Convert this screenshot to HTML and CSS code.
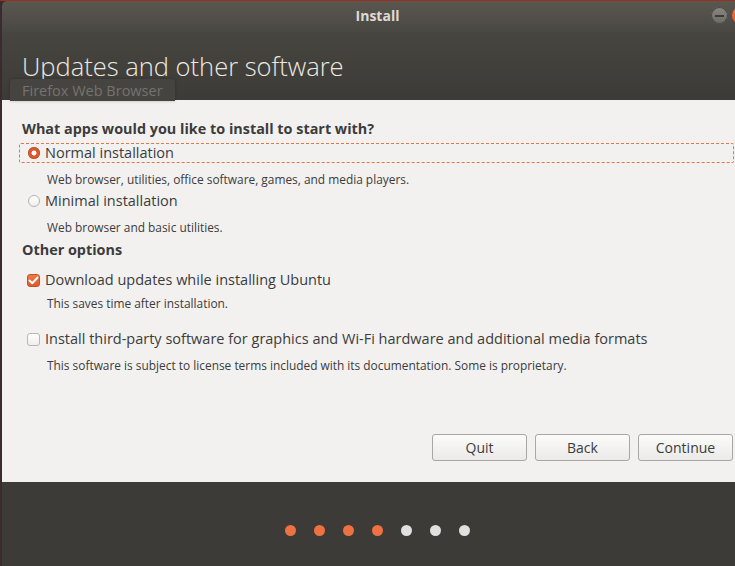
FILE: index.html
```html
<!DOCTYPE html>
<html>
<head>
<meta charset="utf-8">
<link rel="stylesheet" href="styles.css">
</head>
<body>
<div class="window">
  <div class="titlebar">
    <span class="title">Install</span>
    <span class="btn-min"></span>
    <span class="btn-close"></span>
  </div>
  <div class="header">
    <h1 class="heading">Updates and other software</h1>
    <div class="tooltip">Firefox Web Browser</div>
  </div>
  <div class="content">
    <div class="section-title q">What apps would you like to install to start with?</div>
    <div class="option focus">
      <span class="radio checked"></span>
      <span class="label">Normal installation</span>
    </div>
    <div class="desc d1">Web browser, utilities, office software, games, and media players.</div>
    <div class="option o2">
      <span class="radio"></span>
      <span class="label">Minimal installation</span>
    </div>
    <div class="desc d1">Web browser and basic utilities.</div>
    <div class="section-title other">Other options</div>
    <div class="option o3">
      <span class="check checked"><svg width="11" height="9" viewBox="0 0 11 9"><path d="M1.5 4.5 L4.2 7.2 L9.5 1.6" fill="none" stroke="#fff" stroke-width="2" stroke-linecap="round" stroke-linejoin="round"/></svg></span>
      <span class="label">Download updates while installing Ubuntu</span>
    </div>
    <div class="desc d3">This saves time after installation.</div>
    <div class="option o4">
      <span class="check"></span>
      <span class="label">Install third-party software for graphics and Wi-Fi hardware and additional media formats</span>
    </div>
    <div class="desc d1">This software is subject to license terms included with its documentation. Some is proprietary.</div>
    <div class="buttons">
      <button class="button">Quit</button>
      <button class="button">Back</button>
      <button class="button">Continue</button>
    </div>
  </div>
  <div class="footer">
    <span class="dot done"></span>
    <span class="dot done"></span>
    <span class="dot done"></span>
    <span class="dot done"></span>
    <span class="dot"></span>
    <span class="dot"></span>
    <span class="dot"></span>
  </div>
</div>
</body>
</html>
```
FILE: styles.css
```css
html, body {
  margin: 0;
  padding: 0;
}
body {
  width: 735px;
  height: 566px;
  overflow: hidden;
  background: linear-gradient(to bottom, #9a2f22 0, #9a2f22 1px, #3a2b2f 1px);
  font-family: "Open Sans", "Noto Sans", sans-serif;
  color: #3c3c3c;
}
.window {
  margin: 1px 0 0 2px;
  width: 733px;
  height: 565px;
  display: flex;
  flex-direction: column;
  border-radius: 5px 0 0 0;
  overflow: hidden;
  position: relative;
}
.titlebar {
  height: 31px;
  flex: none;
  background: linear-gradient(to bottom, #5a5751, #4a4843);
  display: flex;
  align-items: center;
  justify-content: center;
  padding-left: 18px;
  padding-bottom: 2px;
  box-sizing: border-box;
  position: relative;
}
.title {
  color: #dfdbd2;
  font-weight: 700;
  font-size: 14px;
}
.btn-min {
  position: absolute;
  left: 709px;
  top: 6px;
  width: 17px;
  height: 17px;
  border-radius: 50%;
  background: linear-gradient(to bottom, #8a8782, #6c6a65);
  box-shadow: inset 0 0 0 1px #4a4843;
}
.btn-min::after {
  content: "";
  position: absolute;
  left: 4px;
  top: 8px;
  width: 9px;
  height: 1.5px;
  background: #3c3b37;
}
.btn-close {
  position: absolute;
  left: 730px;
  top: 6px;
  width: 17px;
  height: 17px;
  border-radius: 50%;
  background: linear-gradient(to bottom, #f37c50, #e0541f);
}
.header {
  height: 68px;
  flex: none;
  background: linear-gradient(to bottom, #47453f, #3d3b37);
  position: relative;
}
.heading {
  margin: 0;
  padding: 21px 0 0 20px;
  font-weight: 300;
  font-size: 25.5px;
  line-height: 26px;
  color: #ebe9e4;
}
.tooltip {
  position: absolute;
  left: 8px;
  top: 47px;
  width: 165px;
  height: 22px;
  box-sizing: border-box;
  padding-left: 12px;
  padding-top: 1px;
  background: #464440;
  border-radius: 4px 4px 0 0;
  box-shadow: 0 0 3px rgba(0,0,0,0.25);
  color: #75736e;
  font-size: 14.5px;
  line-height: 22px;
  white-space: nowrap;
}
.content {
  flex: none;
  height: 382px;
  background: #f2f1f0;
  display: flex;
  flex-direction: column;
  padding: 19px 2px 21px 20px;
  box-sizing: border-box;
  font-size: 14px;
}
.section-title {
  font-weight: 700;
  line-height: 20px;
  font-size: 14.4px;
}
.option {
  display: flex;
  align-items: center;
  height: 20px;
  box-sizing: border-box;
  margin-left: -3px;
  padding-left: 8px;
  border: 1px solid transparent;
}
.focus {
  margin-top: 4px;
  border: 1px dashed #e07848;
  border-radius: 2px;
  margin-right: -1px;
}
.o2 { margin-top: 4px; }
.other { margin-top: 5px; }
.o3 { margin-top: 10px; padding-left: 7px; }
.o4 { margin-top: 18px; padding-left: 7px; }
.label {
  margin-left: 5px;
  font-size: 14.5px;
  line-height: 18px;
  white-space: nowrap;
}
.radio {
  width: 12px;
  height: 12px;
  border-radius: 50%;
  box-sizing: border-box;
  border: 1px solid #b5b3ae;
  background: linear-gradient(to bottom, #ffffff, #f0efed);
  flex: none;
  position: relative;
}
.radio.checked {
  border: none;
  background: radial-gradient(circle at 50% 50%, #ffffff 0, #ffffff 2.2px, #d8562a 2.8px, #e46c3b 100%);
  box-shadow: inset 0 0 0 1px #c1512b;
}
.check {
  width: 13px;
  height: 13px;
  box-sizing: border-box;
  border-radius: 3px;
  border: 1px solid #b9b7b2;
  background: linear-gradient(to bottom, #ffffff, #efeeec);
  flex: none;
  display: flex;
  align-items: center;
  justify-content: center;
}
.check.checked {
  border: 1px solid #c1512b;
  background: linear-gradient(to bottom, #ef7a48, #dd5a2a);
}
.desc {
  font-size: 11.9px;
  line-height: 16px;
  margin-left: 25px;
  white-space: nowrap;
}
.d1 { margin-top: 8px; }
.d3 { margin-top: 5px; }
.buttons {
  margin-top: auto;
  display: flex;
  justify-content: flex-end;
  gap: 8px;
}
.button {
  width: 95px;
  height: 27px;
  border: 1px solid #a9a7a3;
  border-radius: 3px;
  background: linear-gradient(to bottom, #fbfbfa, #ebeae8);
  font-family: "Open Sans", "Noto Sans", sans-serif;
  font-size: 14px;
  color: #3c3c3c;
  padding: 0;
}
.footer {
  flex: 1;
  background: #3d3b37;
  display: flex;
  align-items: center;
  justify-content: center;
  gap: 18px;
  padding-left: 18px;
  padding-top: 12px;
}
.dot {
  width: 11px;
  height: 11px;
  border-radius: 50%;
  background: #e0e0df;
}
.dot.done {
  background: #ee7142;
}
```
